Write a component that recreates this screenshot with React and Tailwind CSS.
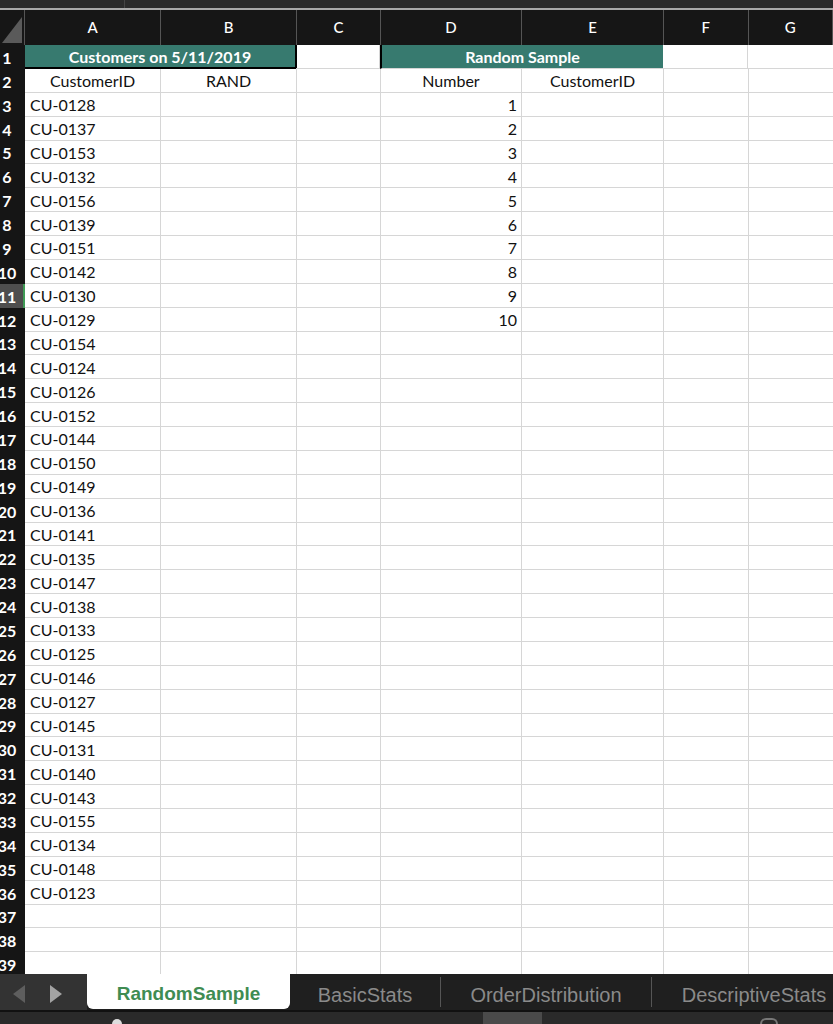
import React from "react";

const ids = [
  "CU-0128","CU-0137","CU-0153","CU-0132","CU-0156","CU-0139","CU-0151","CU-0142","CU-0130","CU-0129",
  "CU-0154","CU-0124","CU-0126","CU-0152","CU-0144","CU-0150","CU-0149","CU-0136","CU-0141","CU-0135",
  "CU-0147","CU-0138","CU-0133","CU-0125","CU-0146","CU-0127","CU-0145","CU-0131","CU-0140","CU-0143",
  "CU-0155","CU-0134","CU-0148","CU-0123",
];

const cell = "h-full shrink-0 border-r border-b border-[#d6d6d6] flex items-center pt-[2px] overflow-hidden whitespace-nowrap";

function RowHead({ n }) {
  const active = n === 11;
  return (
    <div
      className={
        "w-[25px] h-full shrink-0 overflow-hidden flex items-center pt-[2px] " +
        (active ? "bg-[#4e4e4e] border-r-2 border-[#3f9a55]" : "bg-[#151515]")
      }
    >
      <div className="w-[40px] -ml-[13px] shrink-0 text-center text-white font-bold text-[16px] leading-none">
        {n}
      </div>
    </div>
  );
}

function Row({ n, children }) {
  return (
    <div className="flex h-[23.88px] shrink-0">
      <RowHead n={n} />
      {children}
    </div>
  );
}

function Plain({ n, a = "", b = "", d = "", e = "", center = false }) {
  return (
    <Row n={n}>
      <div className={cell + " w-[136px] " + (center ? "justify-center" : "pl-[5px]")}>{a}</div>
      <div className={cell + " w-[136px] justify-center"}>{b}</div>
      <div className={cell + " w-[84px]"}></div>
      <div className={cell + " w-[141px] " + (center ? "justify-center" : "justify-end pr-[4px]")}>{d}</div>
      <div className={cell + " w-[142px] justify-center"}>{e}</div>
      <div className={cell + " w-[84.5px]"}></div>
      <div className={cell + " w-[120px]"}></div>
    </Row>
  );
}

function ColHead({ w, label }) {
  return (
    <div className={"h-full shrink-0 border-r border-[#555] flex items-center justify-center text-white text-[15px] font-medium " + w}>
      {label}
    </div>
  );
}

export default function App() {
  const rows = [];
  for (let n = 3; n <= 39; n++) {
    const idx = n - 3;
    rows.push(
      <Plain key={n} n={n} a={ids[idx] || ""} d={n <= 12 ? String(n - 2) : ""} />
    );
  }
  return (
    <div
      className="w-[833px] h-[1024px] overflow-hidden bg-white flex flex-col text-[#111]"
      style={{ fontFamily: "Lato, 'Open Sans', sans-serif" }}
    >
      <div className="h-[8px] shrink-0 bg-[#2a2a2a] flex">
        <div className="w-[125px] h-full border-r border-[#444]"></div>
      </div>
      <div className="h-[2px] shrink-0 bg-[#a8a8a8]"></div>
      <div className="h-[35px] shrink-0 bg-[#161616] flex">
        <div className="w-[25px] h-full shrink-0 border-r border-[#555] flex items-end justify-end pb-[2px] pr-[2px]">
          <svg width="20" height="26" viewBox="0 0 20 26">
            <polygon points="0,26 20,26 20,0" fill="#5a5a5a" />
          </svg>
        </div>
        <ColHead w="w-[136px]" label="A" />
        <ColHead w="w-[136px]" label="B" />
        <ColHead w="w-[84px]" label="C" />
        <ColHead w="w-[141px]" label="D" />
        <ColHead w="w-[142px]" label="E" />
        <ColHead w="w-[84.5px]" label="F" />
        <ColHead w="w-[84.5px]" label="G" />
      </div>

      <div className="flex-1 overflow-hidden flex flex-col text-[16px]">
        <Row n={1}>
          <div className="w-[272px] h-full shrink-0 bg-[#377a6f] border-r-2 border-b-2 border-black flex items-center justify-center pt-[2px] text-white font-bold whitespace-nowrap">
            Customers on 5/11/2019
          </div>
          <div className={cell + " w-[84px] -ml-px"}></div>
          <div className="w-[283px] h-full shrink-0 bg-[#377a6f] border-l-2 border-black border-b border-b-[#d6d6d6] flex items-center justify-center pt-[2px] text-white font-bold whitespace-nowrap">
            Random Sample
          </div>
          <div className={cell + " w-[84.5px]"}></div>
          <div className={cell + " w-[120px]"}></div>
        </Row>
        <Plain n={2} a="CustomerID" b="RAND" d="Number" e="CustomerID" center />
        {rows}
      </div>

      <div className="h-[36px] shrink-0 flex bg-[#1f1f1f] overflow-hidden" style={{ fontFamily: "'Liberation Sans', Arial, sans-serif" }}>
        <div className="w-[87px] h-full shrink-0 bg-[#333] flex items-center pt-[4px]">
          <svg className="ml-[13px]" width="12" height="18" viewBox="0 0 12 18">
            <polygon points="12,0 12,18 0,9" fill="#5e5e5e" />
          </svg>
          <svg className="ml-[25px]" width="12" height="18" viewBox="0 0 12 18">
            <polygon points="0,0 0,18 12,9" fill="#a3a3a3" />
          </svg>
        </div>
        <div className="w-[203px] h-[35px] shrink-0 bg-white rounded-b-[6px] flex items-center justify-center pt-[5px] text-[#3f8c52] font-bold text-[19px]">
          RandomSample
        </div>
        <div className="w-[150px] h-full shrink-0 flex items-center justify-center pt-[5px] text-[#8a8a8a] text-[20px]">
          BasicStats
        </div>
        <div className="w-px h-[30px] self-center shrink-0 bg-[#555]"></div>
        <div className="w-[210px] h-full shrink-0 flex items-center justify-center pt-[5px] text-[#8a8a8a] text-[20px]">
          OrderDistribution
        </div>
        <div className="w-px h-[30px] self-center shrink-0 bg-[#555]"></div>
        <div className="w-[204px] h-full shrink-0 flex items-center justify-center pt-[5px] text-[#8a8a8a] text-[20px]">
          DescriptiveStats
        </div>
      </div>
      <div className="h-[14px] shrink-0 bg-[#2a2a2a] border-t-2 border-[#111] flex items-end">
        <div className="w-[10px] h-[5px] ml-[112px] rounded-t-full bg-[#ddd] shrink-0"></div>
        <div className="w-[59px] h-full ml-[361px] bg-[#4a4a4a] shrink-0"></div>
        <div className="w-[18px] h-[6px] ml-[218px] rounded-t-full border-t-2 border-x-2 border-[#777] shrink-0"></div>
      </div>
    </div>
  );
}
